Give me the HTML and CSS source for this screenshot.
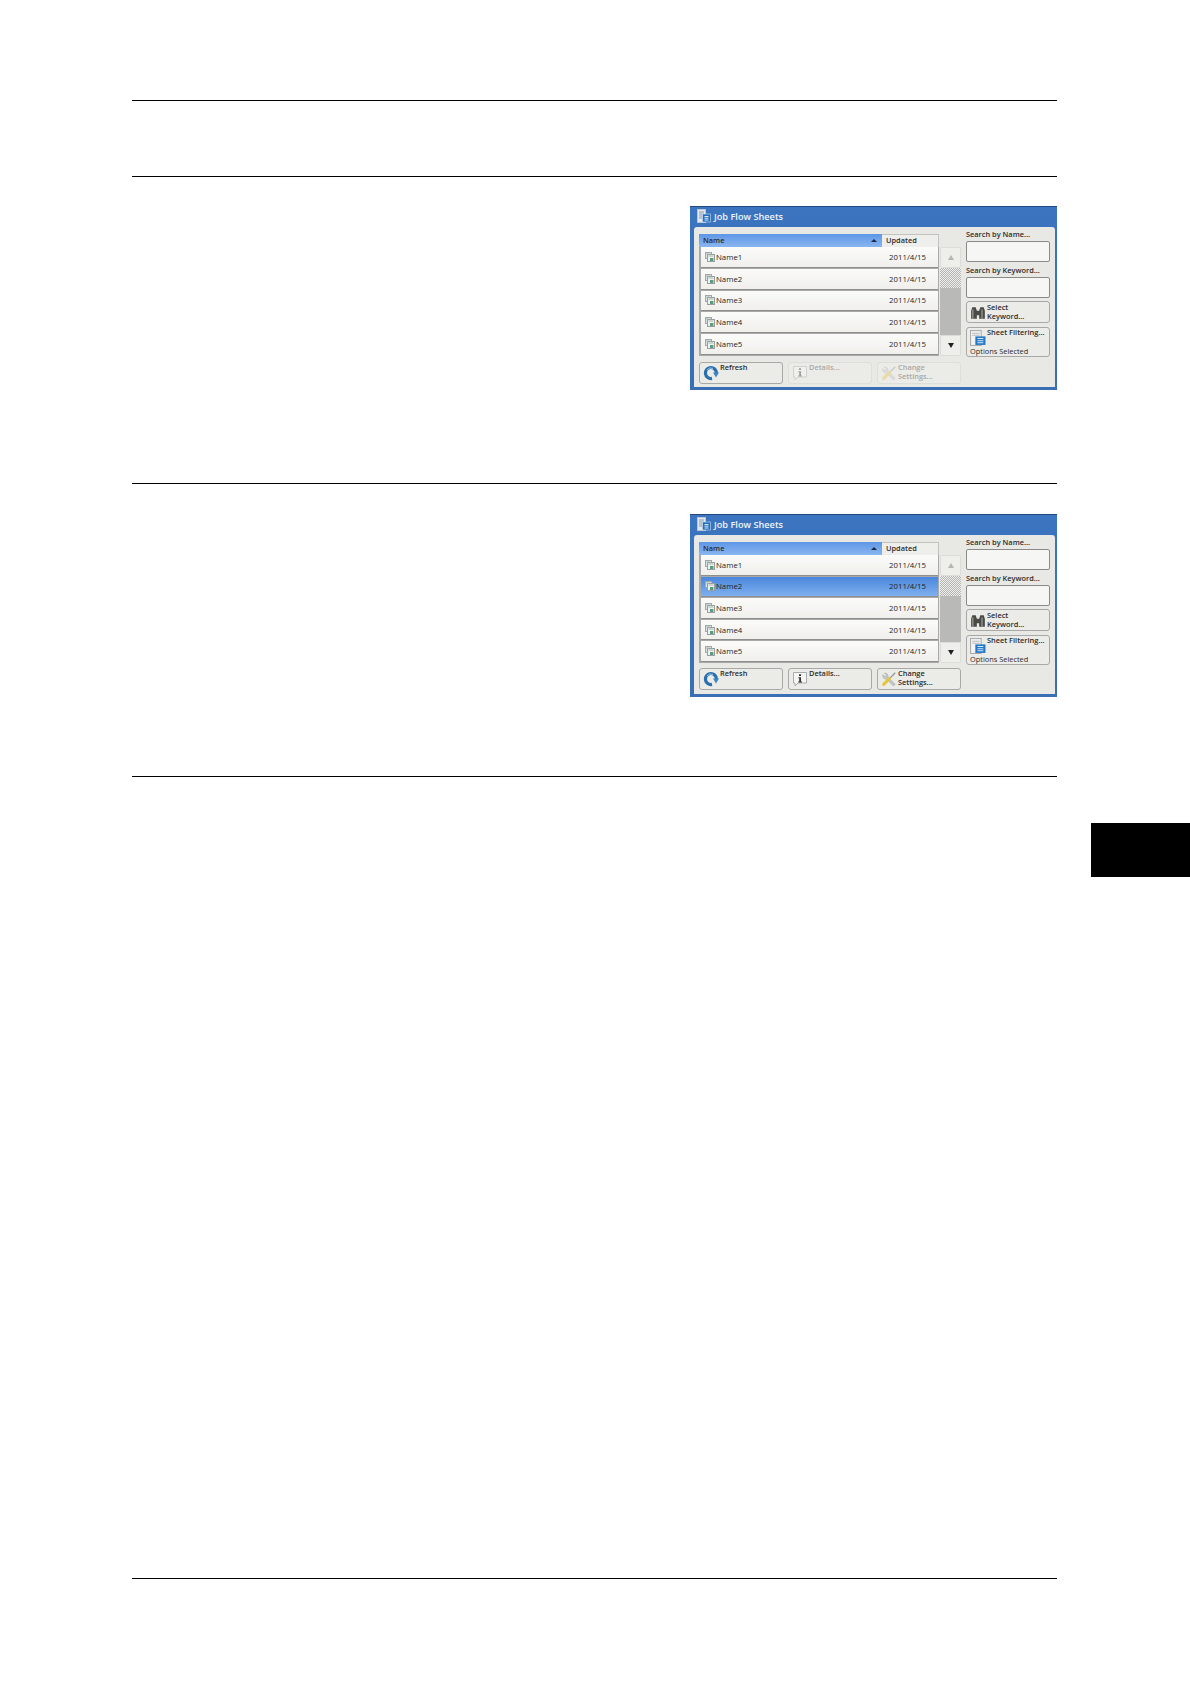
FILE: index.html
```html
<!DOCTYPE html>
<html lang="en">
<head>
  <meta charset="UTF-8" />
  <title>Job Flow Sheets</title>
  <link rel="stylesheet" href="styles.css">
</head>
<body>
  <svg class="icon-defs">
    <symbol id="icon-title" viewBox="0 0 14 14">
      <rect x="0.5" y="0.5" width="8" height="13" fill="#e4e9f0" stroke="#b9c4d2" />
      <path d="M2 3h5M2 5h5M2 7h3M2 9h3" stroke="#8b99ab" />
      <rect x="5.5" y="5" width="8" height="8" fill="#1f6fc0" stroke="#cfe0f2" stroke-width="0.6" />
      <path d="M7.5 7.5h4M7.5 9.2h4M7.5 11h4" stroke="#d6e8f8" />
    </symbol>
    <symbol id="icon-sheet" viewBox="0 0 10 10">
      <rect x="0.5" y="0.5" width="6" height="6" fill="#dfe2e4" stroke="#a2a7ab" />
      <rect x="2.5" y="2.5" width="7" height="7" fill="#f0f1f1" stroke="#989ea2" />
      <rect x="5" y="6" width="3.4" height="3" fill="#5a9c80" />
      <path d="M1.5 2h3M3.5 4h5" stroke="#9cbcab" />
    </symbol>
    <symbol id="icon-binoculars" viewBox="0 0 14 14">
      <path d="M1 12V5l1-3h3l1 3v7zM8 12V5l1-3h3l1 3v7zM6 5h2v4H6z" fill="#4a4a46" />
      <path d="M2.5 4v8M10.5 4v8" stroke="#a5a59e" />
    </symbol>
    <symbol id="icon-filter" viewBox="0 0 15 15">
      <rect x="0.5" y="0.5" width="10" height="14" fill="#f3f3f1" stroke="#a9adb0" />
      <path d="M2 3h7M2 5h7" stroke="#b8bcbf" />
      <rect x="5" y="6" width="9.5" height="8" fill="#2478c6" />
      <path d="M7 8h5.5M7 10h5.5M7 12h5.5" stroke="#cfe5f8" />
    </symbol>
    <symbol id="icon-refresh" viewBox="0 0 16 16">
      <path d="M9 13.4A5.5 5.5 0 1 1 13.4 8" fill="none" stroke="#2a6fae" stroke-width="3.2" />
      <path d="M10 7.5h6l-3 5z" fill="#3d86c6" />
      <path d="M4 5A5 5 0 0 1 10 3.4" fill="none" stroke="#9cc7ea" stroke-width="1" />
    </symbol>
    <symbol id="icon-info" viewBox="0 0 16 16">
      <path d="M1.5 1.5h13v10.5H6L3 15v-3H1.5z" fill="#f5f5f1" stroke="#a9acaa" />
      <path d="M7 3.2h2v1.8H7zM6.4 6.2H9v4.4h1v1H6.2v-1h1V7.2h-.8z" fill="#2e3230" />
    </symbol>
    <symbol id="icon-tools" viewBox="0 0 18 18">
      <path d="M2 4l2.4 2.4 1.8-1.8L3.8 2.2A4 4 0 0 1 8 7.2l8 7.6-2 2.2-7.8-7.8A4 4 0 0 1 2 4z" fill="#c2c6c8" stroke="#909496" stroke-width="0.4" />
      <path d="M16 2l-6.5 6.5" stroke="#8d9294" stroke-width="1.3" />
      <path d="M9.5 8.5L3 15" stroke="#e6c53a" stroke-width="3.4" stroke-linecap="round" />
    </symbol>
  </svg>

  <main class="page">
    <section class="section section-top"></section>

    <section class="section section-idle">
      <div class="panel">
        <div class="panel-title">
          <svg class="icon-title"><use href="#icon-title" /></svg>
          <span>Job Flow Sheets</span>
        </div>
        <div class="panel-body">
          <div class="panel-left">
            <div class="list-head">
              <div class="head-name"><span>Name</span><i class="sort-arrow"></i></div>
              <div class="head-date">Updated</div>
            </div>
            <div class="list-wrap">
              <div class="rows">
                <div class="row"><svg class="icon-sheet"><use href="#icon-sheet" /></svg><span class="row-name">Name1</span><span class="row-date">2011/4/15</span></div>
                <div class="row"><svg class="icon-sheet"><use href="#icon-sheet" /></svg><span class="row-name">Name2</span><span class="row-date">2011/4/15</span></div>
                <div class="row"><svg class="icon-sheet"><use href="#icon-sheet" /></svg><span class="row-name">Name3</span><span class="row-date">2011/4/15</span></div>
                <div class="row"><svg class="icon-sheet"><use href="#icon-sheet" /></svg><span class="row-name">Name4</span><span class="row-date">2011/4/15</span></div>
                <div class="row"><svg class="icon-sheet"><use href="#icon-sheet" /></svg><span class="row-name">Name5</span><span class="row-date">2011/4/15</span></div>
              </div>
              <div class="scroll">
                <div class="scroll-btn scroll-up"><i class="arrow-up"></i></div>
                <div class="scroll-thumb"></div>
                <div class="scroll-track"></div>
                <div class="scroll-btn"><i class="arrow-down"></i></div>
              </div>
            </div>
            <div class="actions">
              <div class="btn"><svg class="icon-btn"><use href="#icon-refresh" /></svg><span>Refresh</span></div>
              <div class="btn btn-off"><svg class="icon-btn"><use href="#icon-info" /></svg><span>Details...</span></div>
              <div class="btn btn-off"><svg class="icon-btn"><use href="#icon-tools" /></svg><span>Change<br />Settings...</span></div>
            </div>
          </div>
          <div class="panel-right">
            <div class="search-label">Search by Name...</div>
            <div class="search-box"></div>
            <div class="search-label">Search by Keyword...</div>
            <div class="search-box"></div>
            <div class="btn btn-side"><svg class="icon-btn"><use href="#icon-binoculars" /></svg><span>Select<br />Keyword...</span></div>
            <div class="btn btn-filter">
              <div class="filter-top"><svg class="icon-btn"><use href="#icon-filter" /></svg><span>Sheet Filtering...</span></div>
              <div class="filter-note">Options Selected</div>
            </div>
          </div>
        </div>
      </div>
    </section>

    <section class="section section-picked">
      <div class="panel">
        <div class="panel-title">
          <svg class="icon-title"><use href="#icon-title" /></svg>
          <span>Job Flow Sheets</span>
        </div>
        <div class="panel-body">
          <div class="panel-left">
            <div class="list-head">
              <div class="head-name"><span>Name</span><i class="sort-arrow"></i></div>
              <div class="head-date">Updated</div>
            </div>
            <div class="list-wrap">
              <div class="rows">
                <div class="row"><svg class="icon-sheet"><use href="#icon-sheet" /></svg><span class="row-name">Name1</span><span class="row-date">2011/4/15</span></div>
                <div class="row row-on"><svg class="icon-sheet"><use href="#icon-sheet" /></svg><span class="row-name">Name2</span><span class="row-date">2011/4/15</span></div>
                <div class="row"><svg class="icon-sheet"><use href="#icon-sheet" /></svg><span class="row-name">Name3</span><span class="row-date">2011/4/15</span></div>
                <div class="row"><svg class="icon-sheet"><use href="#icon-sheet" /></svg><span class="row-name">Name4</span><span class="row-date">2011/4/15</span></div>
                <div class="row"><svg class="icon-sheet"><use href="#icon-sheet" /></svg><span class="row-name">Name5</span><span class="row-date">2011/4/15</span></div>
              </div>
              <div class="scroll">
                <div class="scroll-btn scroll-up"><i class="arrow-up"></i></div>
                <div class="scroll-thumb"></div>
                <div class="scroll-track"></div>
                <div class="scroll-btn"><i class="arrow-down"></i></div>
              </div>
            </div>
            <div class="actions">
              <div class="btn"><svg class="icon-btn"><use href="#icon-refresh" /></svg><span>Refresh</span></div>
              <div class="btn"><svg class="icon-btn"><use href="#icon-info" /></svg><span>Details...</span></div>
              <div class="btn"><svg class="icon-btn"><use href="#icon-tools" /></svg><span>Change<br />Settings...</span></div>
            </div>
          </div>
          <div class="panel-right">
            <div class="search-label">Search by Name...</div>
            <div class="search-box"></div>
            <div class="search-label">Search by Keyword...</div>
            <div class="search-box"></div>
            <div class="btn btn-side"><svg class="icon-btn"><use href="#icon-binoculars" /></svg><span>Select<br />Keyword...</span></div>
            <div class="btn btn-filter">
              <div class="filter-top"><svg class="icon-btn"><use href="#icon-filter" /></svg><span>Sheet Filtering...</span></div>
              <div class="filter-note">Options Selected</div>
            </div>
          </div>
        </div>
      </div>
    </section>

    <section class="section section-rest">
      <div class="chapter-tab"></div>
    </section>

    <section class="section section-foot"></section>
  </main>
</body>
</html>
```

FILE: styles.css
```css
html, body {
  margin: 0;
  background: #fff;
}
.icon-defs {
  display: none;
}
.page {
  box-sizing: border-box;
  width: 925px;
  margin-left: 132px;
  padding-top: 100px;
  font-family: "Open Sans", sans-serif;
  color: #2b2b2b;
}
.section {
  box-sizing: border-box;
  display: flex;
  justify-content: flex-end;
  border-top: 1px solid #000;
}
.section-top {
  height: 76px;
}
.section-idle {
  height: 307px;
  padding-top: 29px;
}
.section-picked {
  height: 293px;
  padding-top: 30px;
}
.section-rest {
  height: 802px;
  align-items: flex-start;
}
.section-foot {
  height: 106px;
}
.chapter-tab {
  flex: none;
  width: 99px;
  height: 54px;
  margin-top: 46px;
  margin-right: -133px;
  background: #000;
}

/* panel */
.panel {
  box-sizing: border-box;
  display: flex;
  flex-direction: column;
  width: 367px;
  height: 184px;
  padding: 0 2px 3px 4px;
  background: linear-gradient(#3b74bf, #3a6fb6);
  border-top: 1px solid #234a80;
}
.section-picked .panel {
  height: 183px;
}
.panel-title {
  box-sizing: border-box;
  display: flex;
  align-items: center;
  gap: 3px;
  height: 20px;
  padding: 0 0 2px 3px;
  color: #eef4fb;
  font-size: 9.2px;
  font-weight: 600;
}
.icon-title {
  width: 14px;
  height: 14px;
}
.panel-body {
  flex: 1;
  display: flex;
  gap: 5px;
  padding: 2px 5px 0;
  background: #e8e8e5;
  border-radius: 3px 3px 0 0;
}
.panel-left {
  width: 262px;
}
.panel-right {
  width: 84px;
}

/* list */
.list-head {
  display: flex;
  width: 240px;
  height: 13px;
  margin-top: 5px;
  font-size: 7.4px;
  font-weight: 600;
  line-height: 13px;
}
.head-name {
  flex: 1;
  display: flex;
  justify-content: space-between;
  align-items: center;
  padding: 0 5px 0 4px;
  background: linear-gradient(#5e96e6, #8ab6f0);
}
.sort-arrow {
  width: 0;
  height: 0;
  border-left: 3px solid transparent;
  border-right: 3px solid transparent;
  border-bottom: 3px solid #1d2b44;
}
.head-date {
  box-sizing: border-box;
  width: 57px;
  padding-left: 4px;
  background: #eeeeeb;
  border: 1px solid #c2c2c0;
  border-width: 1px 1px 0 0;
  line-height: 11px;
}
.list-wrap {
  display: flex;
  gap: 1px;
  height: 109px;
}
.section-picked .list-wrap {
  height: 108px;
}
.rows {
  box-sizing: border-box;
  display: flex;
  flex-direction: column;
  gap: 1px;
  width: 240px;
  padding: 0 1px 1px 2px;
  background: #a9a9a7;
}
.row {
  box-sizing: border-box;
  flex: 1;
  display: flex;
  align-items: center;
  padding: 0 12px 0 4px;
  background: linear-gradient(#fbfbf9, #f0efec);
  border-bottom: 1px solid #8e8e8c;
  color: #1f1f1f;
  font-size: 7.8px;
}
.row-on {
  background: linear-gradient(#4a86dc, #7fb0ee);
}
.icon-sheet {
  width: 10px;
  height: 10px;
  margin-right: 1px;
}
.row-name {
  flex: 1;
}

/* scroll bar */
.scroll {
  display: flex;
  flex-direction: column;
  width: 21px;
}
.scroll-btn {
  box-sizing: border-box;
  display: flex;
  align-items: center;
  justify-content: center;
  height: 21px;
  background: #eeeeeb;
  border: 1px solid #dcdcd9;
  border-radius: 0 0 2px 2px;
}
.scroll-up i {
  opacity: 0.3;
}
.arrow-up, .arrow-down {
  width: 0;
  height: 0;
  border-left: 3px solid transparent;
  border-right: 3px solid transparent;
}
.arrow-up {
  border-bottom: 5px solid #333;
}
.arrow-down {
  border-top: 5px solid #222;
}
.scroll-thumb {
  height: 20px;
  background: repeating-conic-gradient(#b4b4b2 0 25%, #eeeeec 0 50%) 0 0 / 2px 2px;
}
.scroll-track {
  flex: 1;
  background: #b9b9b7;
}

/* buttons */
.actions {
  display: flex;
  gap: 5px;
  margin-top: 6px;
}
.section-picked .actions {
  margin-top: 5px;
}
.btn {
  box-sizing: border-box;
  display: flex;
  width: 84px;
  height: 22px;
  padding: 0 2px 0 3px;
  background: #ebebe8;
  border: 1px solid #a8a8a6;
  border-radius: 3px;
  font-size: 7.4px;
  font-weight: 600;
  line-height: 9.3px;
}
.btn-off {
  border-color: #dededb;
  color: #a9a9a7;
}
.btn-off svg {
  opacity: 0.4;
}
.icon-btn {
  flex: none;
  width: 16px;
  height: 16px;
  margin: 2px 1px 0 0;
}
.search-label {
  height: 11px;
  font-size: 7.4px;
  font-weight: 600;
  line-height: 11px;
  margin-bottom: 1px;
}
.search-box {
  box-sizing: border-box;
  height: 21px;
  margin-bottom: 3px;
  background: #f6f6f4;
  border: 1px solid #8a8a88;
  border-radius: 2px;
}
.btn-side {
  margin-top: 1px;
  padding-top: 1px;
}
.section-picked .btn-side {
  margin-top: 0;
}
.btn-filter {
  display: block;
  height: 30px;
  margin-top: 4px;
}
.filter-top {
  display: flex;
}
.filter-note {
  margin-top: 1px;
  font-weight: 400;
  white-space: nowrap;
}
```
